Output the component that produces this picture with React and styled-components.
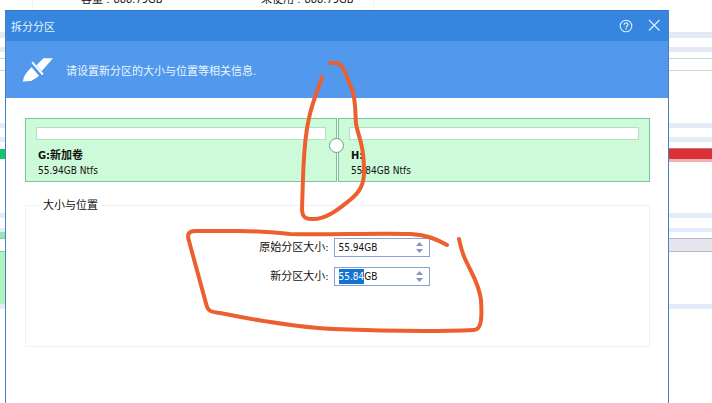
import React, { useEffect, useRef } from 'react'
import styled, { createGlobalStyle } from 'styled-components'

const GlobalStyle = createGlobalStyle`
  * {
    box-sizing: border-box;
  }

  body {
    margin: 0;
    background: #fff;
    color: #111;
    font-family: 'DejaVu Sans Condensed', 'Noto Sans CJK SC', sans-serif;
    font-size: 11px;
    line-height: 15px;
  }
`

const Page = styled.div`
  position: relative;
  display: grid;
  min-height: 100vh;
  overflow: hidden;

  > * {
    grid-area: 1 / 1;
  }
`

// Main window, seen only around the edges of the dialog
const MainWindow = styled.div`
  display: flex;
  flex-direction: column;
`

const Summary = styled.dl`
  display: grid;
  grid-template-columns: 180px 1fr;
  width: 342px;
  height: 32px;
  margin: 0 0 0 32px;
  padding-left: 48px;
  border: 1px solid #f3f3f3;
  border-top: 0;

  > div {
    display: flex;
    gap: 4px;
    height: 15px;
    margin-top: -8px;
  }

  dt,
  dd {
    margin: 0;
  }
`

const Strip = styled.div`
  display: flex;
  justify-content: space-between;
  height: ${({ $height }) => $height}px;
  background: ${({ $color }) => $color || 'transparent'};
`

const StripEnd = styled.div`
  width: ${({ $wide }) => ($wide ? '50%' : '10px')};
  background: ${({ $color }) => $color || 'transparent'};
`

const Dialog = styled.section`
  display: flex;
  flex-direction: column;
  margin: 10px 43px 0 5px;
  background: #fff;
  border: 1px solid #4880c4;
  border-top-color: #2f75c8;
  border-bottom: 0;
`

const TitleBar = styled.header`
  display: flex;
  align-items: center;
  justify-content: space-between;
  height: 30px;
  padding: 0 7px 0 5px;
  background: #3685df;
  color: #e4f6ff;

  h1 {
    margin: 2px 0 0;
    font-size: 11px;
    font-weight: 400;
  }
`

const WindowActions = styled.div`
  display: flex;
  gap: 14px;
`

const IconButton = styled.button`
  display: flex;
  padding: 0;
  border: 0;
  background: none;
  color: #d9f4ff;
`

const Banner = styled.div`
  display: flex;
  align-items: center;
  gap: 13px;
  height: 57px;
  padding-left: 16px;
  background: #5298ec;
  color: #e8f7ff;

  p {
    margin: 3px 0 0;
  }
`

const Body = styled.div`
  display: flex;
  flex-direction: column;
  gap: 16px;
  padding: 20px 18px 0 19px;
`

const DiskMap = styled.div`
  position: relative;
  display: grid;
  grid-template-columns: 1fr 1fr;
  gap: 1px;
`

const Partition = styled.div`
  height: 64px;
  padding: 8px 10px 0;
  background: #cdfbd9;
  border: 1px solid #7cc394;

  h2,
  p {
    margin: 0 2px;
    font-size: 11px;
    line-height: 15px;
  }

  p {
    font-size: 10px;
  }
`

const UsageBar = styled.div`
  height: 13px;
  margin-bottom: 8px;
  background: #fff;
  border: 1px solid #b4dfc0;
`

const Splitter = styled.button`
  position: absolute;
  top: 20px;
  left: calc(50% - 9px);
  width: 15px;
  height: 15px;
  padding: 0;
  background: #fff;
  border: 1px solid #5fa77a;
  border-radius: 50%;
  cursor: ew-resize;
`

const SizeGroup = styled.fieldset`
  display: flex;
  flex-direction: column;
  align-items: center;
  gap: 10px;
  min-height: 149px;
  margin: 0;
  padding: 25px 0 0;
  border: 1px solid #f2f2f2;

  legend {
    margin-left: 13px;
    padding: 0 4px;
  }
`

const Field = styled.div`
  display: grid;
  grid-template-columns: 100px 96px;
  align-items: center;
  gap: 5px;
  margin-left: -17px;

  label {
    text-align: right;
  }
`

const SpinBox = styled.div`
  display: flex;
  align-items: center;
  height: 19px;
  padding: 0 6px 0 4px;
  background: #fff;
  border: 1px solid #86a3d6;

  input {
    flex: 1;
    min-width: 0;
    height: 15px;
    padding: 0;
    border: 0;
    outline: 0;
    background: none;
    color: #111;
    font: inherit;
    font-size: 10px;
  }

  input::selection {
    background: #1273d2;
    color: #fff;
  }
`

const Steppers = styled.div`
  display: flex;
  flex-direction: column;
  gap: 3px;

  button {
    display: flex;
    padding: 0;
    border: 0;
    background: none;
  }
`

const Markup = styled.svg`
  position: absolute;
  top: 0;
  left: 0;
  width: 100%;
  pointer-events: none;
`

const strips = [
  { height: 6, color: '#e5e9f5' },
  { height: 9 },
  { height: 5, color: '#e5e9f5' },
  { height: 6 },
  { height: 1, color: '#bfdccb' },
  { height: 11 },
  { height: 1, color: '#bfdccb' },
  { height: 52 },
  { height: 5, color: '#e4ecf8' },
  { height: 9 },
  { height: 5, color: '#e4ecf8' },
  { height: 6 },
  { height: 1, right: '#c9787a' },
  { height: 10, left: '#14c46c', right: '#db3035' },
  { height: 3, right: '#f2b0b4' },
  { height: 51 },
  { height: 5, color: '#e4ecf8' },
  { height: 10 },
  { height: 4, color: '#e2eefb' },
  { height: 6, left: '#9fe0b2' },
  { height: 1, left: '#8fc9a2', right: '#b9b9bf' },
  { height: 12, right: '#e5e6ee' },
  { height: 1, left: '#8fc9a2', right: '#b9b9bf' },
  { height: 52, left: '#b2f3c2' },
  { height: 5, color: '#e2ecf8' },
]

const Stepper = ({ name }) => (
  <Steppers>
    <button type="button" aria-label={`${name} +`}>
      <svg width="7" height="4" viewBox="0 0 7 4"><path d="M0 4 3.5 0 7 4Z" fill="#8494bd" /></svg>
    </button>
    <button type="button" aria-label={`${name} -`}>
      <svg width="7" height="4" viewBox="0 0 7 4"><path d="M0 0h7L3.5 4Z" fill="#8494bd" /></svg>
    </button>
  </Steppers>
)

const App = () => {
  const newSize = useRef(null)

  useEffect(() => {
    newSize.current.focus()
    newSize.current.setSelectionRange(0, 5)
  }, [])

  return (
    <Page>
      <GlobalStyle />
      <MainWindow>
        <Summary>
          <div><dt>容量 :</dt><dd>888.79GB</dd></div>
          <div><dt>未使用 :</dt><dd>888.79GB</dd></div>
        </Summary>
        {strips.map((strip, i) => (
          <Strip key={i} $height={strip.height} $color={strip.color}>
            <StripEnd $color={strip.left} />
            <StripEnd $wide $color={strip.right} />
          </Strip>
        ))}
      </MainWindow>

      <Dialog role="dialog" aria-labelledby="dialog-title">
        <TitleBar>
          <h1 id="dialog-title">拆分分区</h1>
          <WindowActions>
            <IconButton type="button" aria-label="帮助">
              <svg width="15" height="15" viewBox="0 0 15 15" fill="none" stroke="currentColor">
                <circle cx="8" cy="7" r="5.8" strokeWidth="1.1" />
                <path d="M6.1 5.8c0-2.5 3.9-2.4 3.9-.1 0 1.4-1.9 1.3-1.9 2.9M8.1 9.3v1.3" strokeWidth="1.3" />
              </svg>
            </IconButton>
            <IconButton type="button" aria-label="关闭">
              <svg width="14" height="14" viewBox="0 0 14 14" fill="none" stroke="currentColor">
                <path d="m2 1 10.5 10.5M12.5 1 2 11.5" strokeWidth="1.2" />
              </svg>
            </IconButton>
          </WindowActions>
        </TitleBar>

        <Banner>
          <svg width="31" height="26" viewBox="0 0 31 26" fill="#fff">
            <path d="M21.5 1.2H31L19.6 14.2 14.4 8.2Z" />
            <path d="m10.8 4.4 10.8 12.4-1.5 1.4L9.4 5.8Z" />
            <path d="m9.6 10.2 7.4 8.6C13.6 21.6 11 23.2 8.2 24L.8 24.6 1.8 20.4C3 17.4 6 13.4 9.6 10.2Z" />
          </svg>
          <p>请设置新分区的大小与位置等相关信息.</p>
        </Banner>

        <Body>
          <DiskMap>
            <Partition>
              <UsageBar />
              <h2>G:新加卷</h2>
              <p>55.94GB Ntfs</p>
            </Partition>
            <Partition>
              <UsageBar />
              <h2>H:</h2>
              <p>55.84GB Ntfs</p>
            </Partition>
            <Splitter type="button" aria-label="调整分区大小" />
          </DiskMap>

          <SizeGroup>
            <legend>大小与位置</legend>
            <Field>
              <label htmlFor="original-size">原始分区大小:</label>
              <SpinBox>
                <input id="original-size" defaultValue="55.94GB" />
                <Stepper name="原始分区大小" />
              </SpinBox>
            </Field>
            <Field>
              <label htmlFor="new-size">新分区大小:</label>
              <SpinBox>
                <input id="new-size" ref={newSize} defaultValue="55.84GB" />
                <Stepper name="新分区大小" />
              </SpinBox>
            </Field>
          </SizeGroup>
        </Body>
      </Dialog>

      <Markup viewBox="0 0 712 403" fill="none" stroke="#ec602f" strokeWidth="4" strokeLinecap="round" strokeLinejoin="round" aria-hidden="true">
        <path d="M322 77C318 90 312 103 309 118C304 140 304 156 303 178L302 208C302 216 304 219 312 219C326 220 340 208 350 200C360 192 364 184 364 172C364 145 359 139 356 124C355 111 356 101 352 89C346 75 343 64 337 63L330 63" />
        <path d="M447 245C438 240 428 235 410 234C375 233 325 235 290 234C270 232 252 231 240 231L195 231C188 231 187 235 189 241L207 307C209 312 213 312 220 313C255 320 295 327 333 329C385 331 425 332 474 330C482 330 482 316 481 300C479 284 472 274 467 263C462 254 461 248 459 239" />
      </Markup>
    </Page>
  )
}

export default App
